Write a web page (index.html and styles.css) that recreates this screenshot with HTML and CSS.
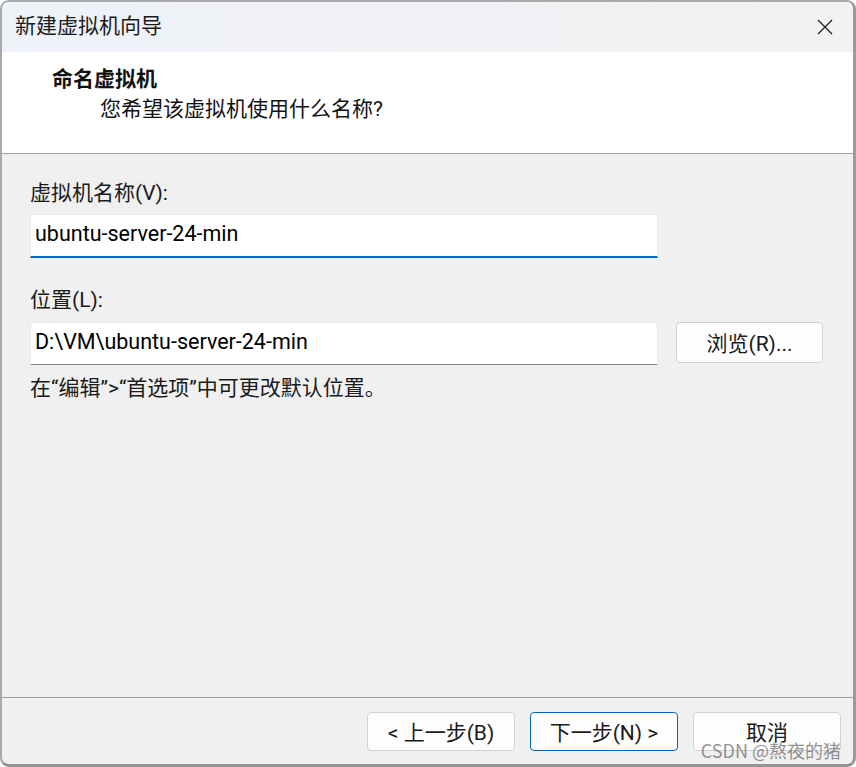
FILE: index.html
```html
<!DOCTYPE html>
<html lang="zh-CN">
<head>
<meta charset="utf-8">
<title>新建虚拟机向导</title>
<link rel="stylesheet" href="styles.css">
</head>
<body>
<div class="window">
  <div class="titlebar">
    <span class="title">新建虚拟机向导</span>
    <span class="close">
      <svg width="16" height="16" viewBox="0 0 16 16"><path d="M1 1 L15 15 M15 1 L1 15" stroke="#1a1a1a" stroke-width="1.2" fill="none"/></svg>
    </span>
  </div>
  <div class="header">
    <div class="h-title">命名虚拟机</div>
    <div class="h-sub">您希望该虚拟机使用什么名称?</div>
  </div>
  <div class="content">
    <div class="label">虚拟机名称(V):</div>
    <div class="field focused">ubuntu-server-24-min</div>
    <div class="label label2">位置(L):</div>
    <div class="row">
      <div class="field plain">D:\VM\ubuntu-server-24-min</div>
      <div class="btn browse">浏览(R)...</div>
    </div>
    <div class="hint">在“编辑”&gt;“首选项”中可更改默认位置。</div>
  </div>
  <div class="footer">
    <div class="btn">&lt; 上一步(B)</div>
    <div class="btn primary">下一步(N) &gt;</div>
    <div class="btn">取消</div>
  </div>
  <div class="watermark">CSDN @熬夜的猪</div>
</div>
</body>
</html>
```

FILE: styles.css
```css
html, body {
  margin: 0;
  padding: 0;
  background: #ffffff;
}
body {
  font-family: Roboto, "Noto Sans CJK SC", sans-serif;
  font-size: 21px;
  color: #1a1a1a;
}
.window {
  position: relative;
  width: 856px;
  height: 767px;
  box-sizing: border-box;
  border-style: solid;
  border-width: 2px 3px 3px 2px;
  border-color: #a9a9a9 #9a9a9a #939393 #a9a9a9;
  border-radius: 9px;
  overflow: hidden;
  display: flex;
  flex-direction: column;
  background: #f0f0f0;
}
.titlebar {
  height: 50px;
  flex: none;
  display: flex;
  align-items: center;
  justify-content: space-between;
  padding: 0 20px 3px 13px;
  box-sizing: border-box;
  background: linear-gradient(to right, #eef2f9, #f3f1f2);
}
.title {
  line-height: 28px;
  color: #1b1b1b;
}
.close {
  display: flex;
  width: 16px;
  height: 16px;
  margin-top: 3px;
}
.header {
  height: 102px;
  flex: none;
  box-sizing: border-box;
  background: #ffffff;
  border-bottom: 1px solid #a0a0a0;
  padding: 13px 0 0 50px;
}
.h-title {
  font-weight: 700;
  line-height: 28px;
  color: #111;
}
.h-sub {
  line-height: 28px;
  margin-top: 2px;
  padding-left: 48px;
  color: #111;
}
.content {
  flex: 1;
  padding: 25px 30px 0 28px;
}
.label {
  line-height: 28px;
}
.label2 {
  margin-top: 28px;
}
.field {
  width: 628px;
  height: 44px;
  box-sizing: border-box;
  background: #ffffff;
  border: 1px solid #e8e8e8;
  border-bottom: 2px solid #0067c0;
  border-radius: 3px 3px 0 0;
  display: flex;
  align-items: center;
  padding: 0 0 5px 4px;
  margin-top: 7px;
  color: #000;
  font-size: 21.5px;
  white-space: nowrap;
}
.field.plain {
  height: 43px;
  margin-top: 0;
  border-bottom: 1px solid #8a8a8a;
  padding-bottom: 4px;
}
.row {
  display: flex;
  gap: 18px;
  margin-top: 8px;
}
.btn {
  width: 148px;
  height: 39px;
  box-sizing: border-box;
  background: #fdfdfd;
  border: 1px solid #d0d0d0;
  border-radius: 4px;
  display: flex;
  align-items: center;
  justify-content: center;
  padding-bottom: 2px;
  color: #1a1a1a;
  white-space: nowrap;
}
.btn.browse {
  width: 147px;
  height: 41px;
}
.btn.primary {
  border-color: #0067c0;
}
.hint {
  line-height: 28px;
  margin-top: 9px;
}
.footer {
  flex: none;
  height: 67px;
  box-sizing: border-box;
  border-top: 1px solid #a0a0a0;
  display: flex;
  justify-content: flex-end;
  gap: 15px;
  padding: 14px 12px 0 0;
}
.watermark {
  position: absolute;
  right: 12px;
  bottom: 2px;
  font-family: "Noto Sans CJK SC", sans-serif;
  font-size: 18px;
  line-height: 24px;
  color: rgba(110, 110, 110, 0.75);
  pointer-events: none;
}
```
